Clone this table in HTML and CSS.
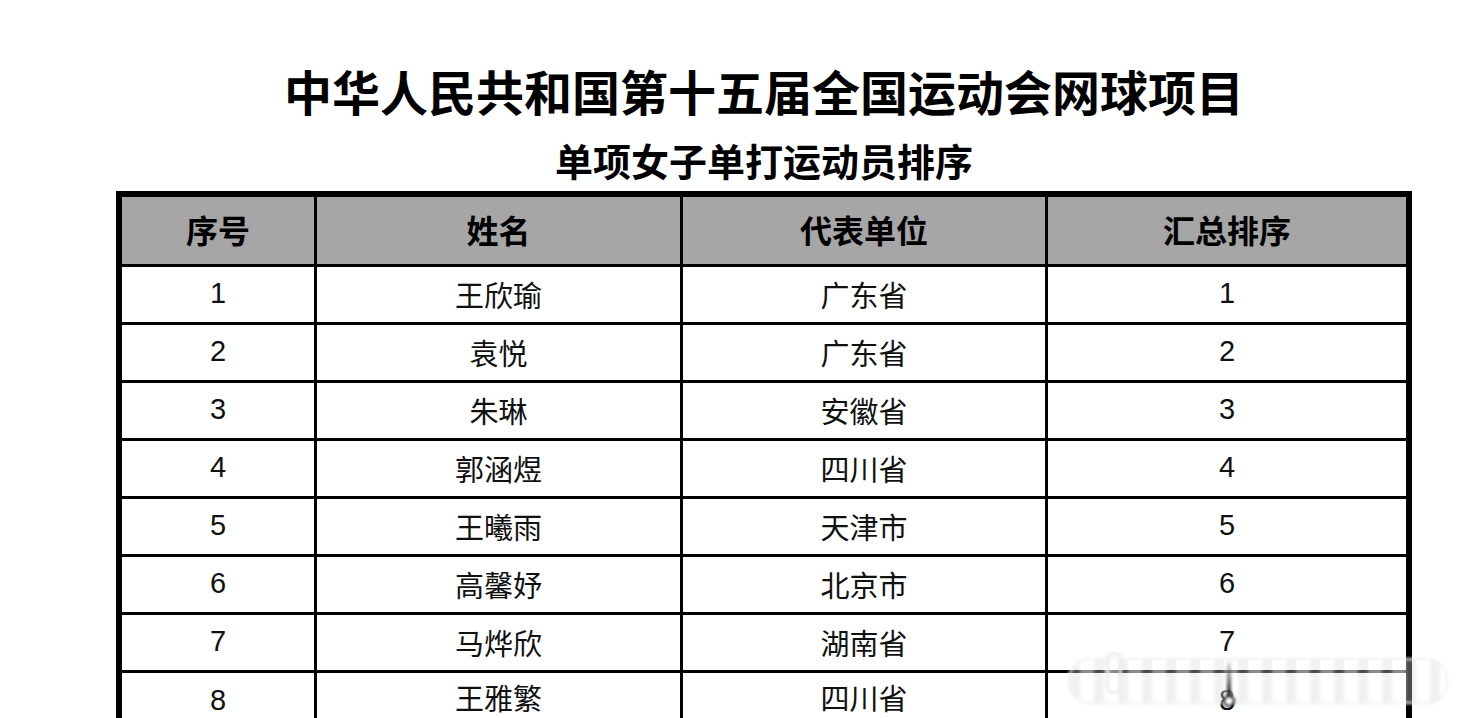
FILE: index.html
```html
<!DOCTYPE html>
<html lang="zh-CN">
<head>
<meta charset="utf-8">
<title>单项女子单打运动员排序</title>
<link rel="stylesheet" href="styles.css">
</head>
<body>
<div class="page">
  <h1 class="title">中华人民共和国第十五届全国运动会网球项目</h1>
  <h2 class="subtitle">单项女子单打运动员排序</h2>
  <table class="rank">
    <colgroup>
      <col class="c1"><col class="c2"><col class="c3"><col class="c4">
    </colgroup>
    <thead>
      <tr><th>序号</th><th>姓名</th><th>代表单位</th><th>汇总排序</th></tr>
    </thead>
    <tbody>
      <tr><td>1</td><td>王欣瑜</td><td>广东省</td><td>1</td></tr>
      <tr><td>2</td><td>袁悦</td><td>广东省</td><td>2</td></tr>
      <tr><td>3</td><td>朱琳</td><td>安徽省</td><td>3</td></tr>
      <tr><td>4</td><td>郭涵煜</td><td>四川省</td><td>4</td></tr>
      <tr><td>5</td><td>王曦雨</td><td>天津市</td><td>5</td></tr>
      <tr><td>6</td><td>高馨妤</td><td>北京市</td><td>6</td></tr>
      <tr><td>7</td><td>马烨欣</td><td>湖南省</td><td>7</td></tr>
      <tr class="last"><td>8</td><td>王雅繁</td><td>四川省</td><td>8</td></tr>
    </tbody>
  </table>
</div>
<div class="watermark" aria-hidden="true">
  <span class="wm-hook"></span>
  <span class="wm-bar"></span>
  <span class="wm-dot"></span>
</div>
</body>
</html>
```

FILE: styles.css
```css
html, body {
  margin: 0;
  padding: 0;
  background: #ffffff;
  overflow: hidden;
}

body {
  height: 718px;
  font-family: "Liberation Sans", "Noto Sans CJK SC", sans-serif;
  color: #000;
}

.page {
  width: 1296px;
  padding-left: 116px;
}

.title {
  margin: 62px 0 0 0;
  font-family: "Noto Sans CJK SC", sans-serif;
  font-weight: 700;
  font-size: 48px;
  line-height: 56px;
  text-align: center;
}

.subtitle {
  margin: 18px 0 0 0;
  font-family: "Noto Sans CJK SC", sans-serif;
  font-weight: 700;
  font-size: 38px;
  line-height: 48px;
  text-align: center;
}

.rank {
  margin-top: 7px;
  width: 1296px;
  table-layout: fixed;
  border-collapse: separate;
  border-spacing: 0;
  border: 6px solid #000;
}

.c1 { width: 195px; }
.c2 { width: 366px; }
.c3 { width: 365px; }
.c4 { width: 358px; }

.rank th,
.rank td {
  box-sizing: border-box;
  padding: 0;
  text-align: center;
  vertical-align: middle;
  border-right: 3px solid #000;
  border-bottom: 3px solid #000;
}

.rank th:last-child,
.rank td:last-child {
  border-right: none;
}

.rank th {
  height: 70px;
  padding-bottom: 4px;
  background: #a6a6a6;
  font-family: "Noto Sans CJK SC", sans-serif;
  font-weight: 700;
  font-size: 32px;
  color: #000;
}

.rank td {
  height: 58px;
  padding-bottom: 2px;
  font-size: 29px;
  color: #111;
}

.rank .last td {
  vertical-align: top;
  padding-top: 10px;
  line-height: 34px;
}

.watermark {
  position: absolute;
  left: 1068px;
  top: 658px;
  width: 376px;
  height: 42px;
  border-radius: 21px;
  border: 2px solid rgba(240, 240, 240, 0.95);
  background: repeating-linear-gradient(90deg,
    rgba(215, 215, 215, 0.35) 0px, rgba(215, 215, 215, 0.35) 10px,
    rgba(255, 255, 255, 0.55) 10px, rgba(255, 255, 255, 0.55) 24px);
  filter: blur(1.5px);
}

.wm-hook {
  position: absolute;
  left: 36px;
  top: -8px;
  width: 10px;
  height: 36px;
  border: 3px solid rgba(235, 235, 235, 0.95);
  border-radius: 7px;
}

.wm-bar {
  position: absolute;
  left: 157px;
  top: 2px;
  width: 4px;
  height: 34px;
  background: linear-gradient(180deg, rgba(90,90,90,0.15), #111);
}

.wm-dot {
  position: absolute;
  left: 153px;
  top: 35px;
  width: 8px;
  height: 8px;
  border: 2px solid #000;
  border-radius: 50%;
  background: #fff;
}
```
